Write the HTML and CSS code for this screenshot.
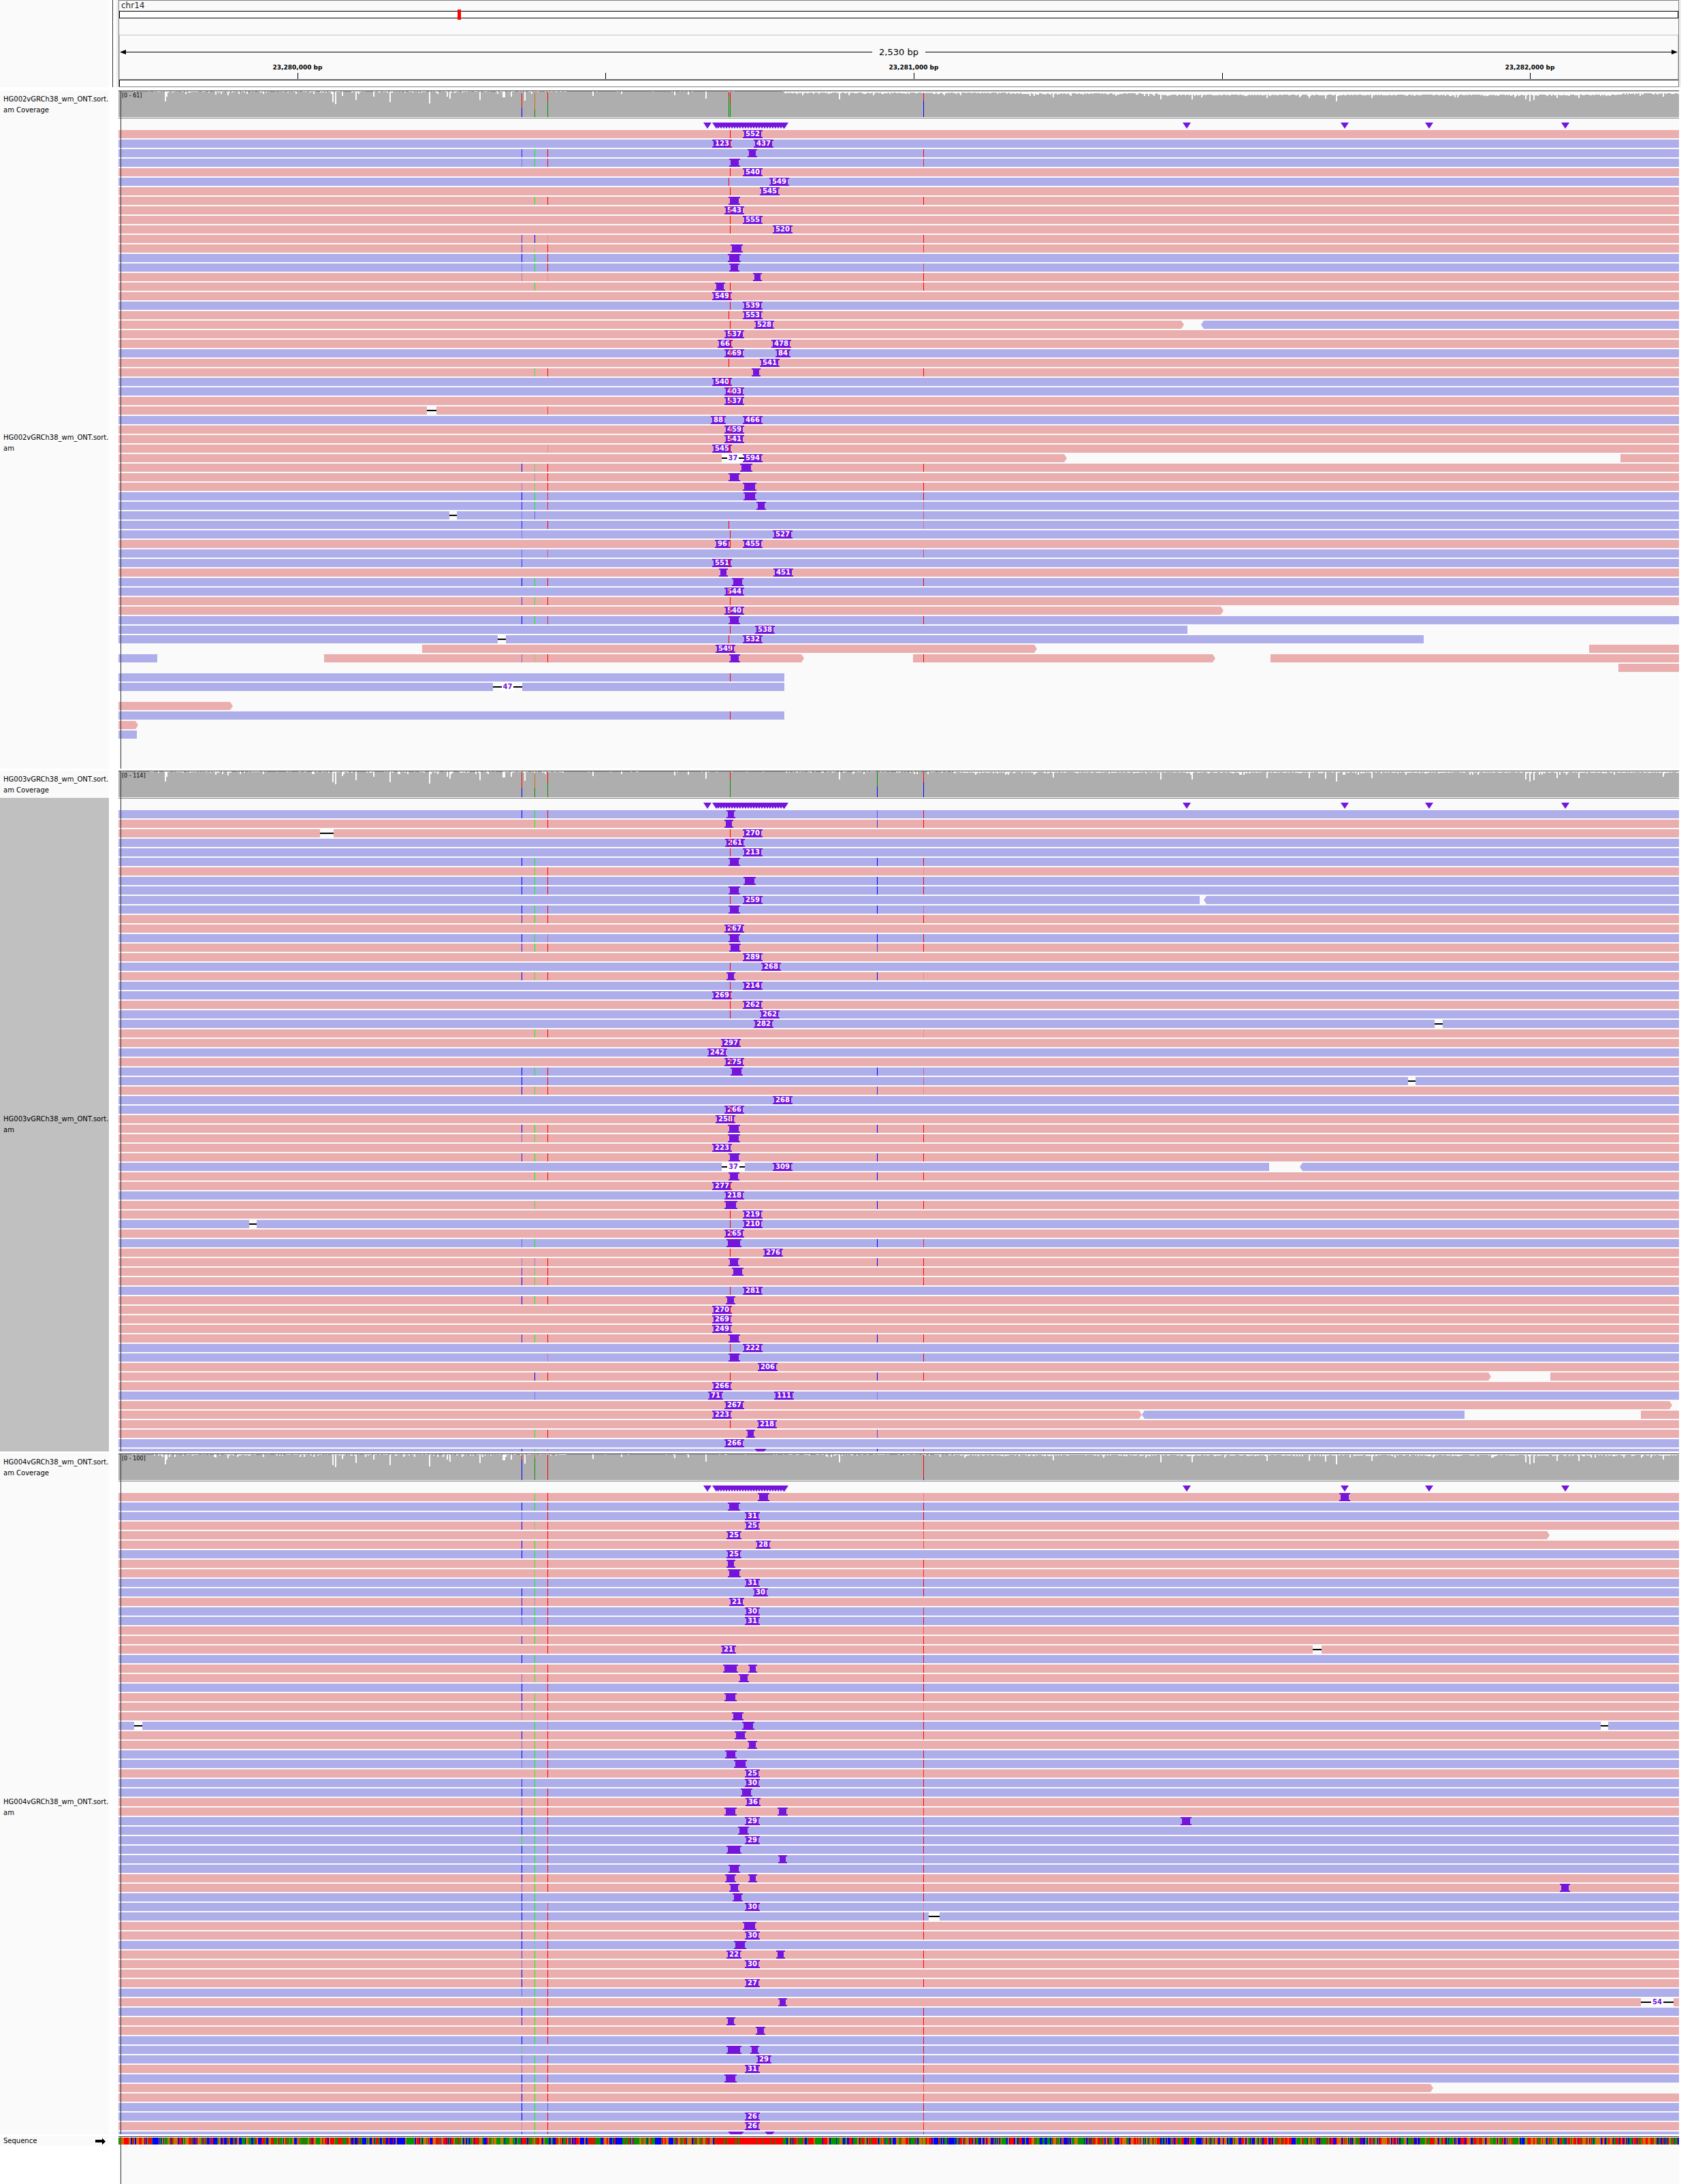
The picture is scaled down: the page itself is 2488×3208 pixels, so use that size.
FILE: index.html
```html
<!DOCTYPE html>
<html lang="en">
<head>
<meta charset="utf-8">
<title>chr14 alignments</title>
<link rel="stylesheet" href="styles.css">
</head>
<body>
<header class="header">
  <div class="name-panel"></div>
  <div class="divider"></div>
  <div class="locus">
    <div class="chromosome">chr14</div>
    <div class="ideogram"><span class="window" id="window"></span></div>
    <div class="ruler">
      <div class="span">
        <svg class="arrow" viewBox="0 0 9 7"><path d="M0 3.5L9 0V7Z"/></svg>
        <span class="span-line"></span>
        <span class="span-text">2,530 bp</span>
        <span class="span-line"></span>
        <svg class="arrow" viewBox="0 0 9 7"><path d="M9 3.5L0 0V7Z"/></svg>
      </div>
      <div class="ticks" id="ticks"></div>
    </div>
    <div class="regions"></div>
  </div>
  <div class="scroll-edge"></div>
</header>

<main>
  <section class="panel">
    <div class="names">
      <div class="name name-coverage">HG002vGRCh38_wm_ONT.sort.<br>am Coverage</div>
      <div class="name name-reads">HG002vGRCh38_wm_ONT.sort.<br>am</div>
    </div>
    <div class="data" data-track="HG002"></div>
  </section>
  <section class="panel">
    <div class="names">
      <div class="name name-coverage">HG003vGRCh38_wm_ONT.sort.<br>am Coverage</div>
      <div class="name name-reads selected">HG003vGRCh38_wm_ONT.sort.<br>am</div>
    </div>
    <div class="data" data-track="HG003"></div>
  </section>
  <section class="panel">
    <div class="names">
      <div class="name name-coverage">HG004vGRCh38_wm_ONT.sort.<br>am Coverage</div>
      <div class="name name-reads">HG004vGRCh38_wm_ONT.sort.<br>am</div>
    </div>
    <div class="data" data-track="HG004"></div>
  </section>
  <section class="panel panel-sequence">
    <div class="names">
      <div class="name name-sequence">Sequence
        <svg class="strand" viewBox="0 0 15 9"><path d="M0 2H10V0H11V1H12V2H13V3H14V4H15V5H14V6H13V7H12V8H11V9H10V6H0Z"/></svg>
      </div>
    </div>
    <div class="data" id="sequence"></div>
  </section>
</main>
<script src="tracks.js"></script>
</body>
</html>
```
FILE: styles.css
```css
:root {
  --paper: #fafafa;
  --line: #333;
  --edge: #808080;
  --forward: #ebaeae;
  --reverse: #aeaeeb;
  --insertion: #7515dc;
}

* { box-sizing: border-box; }

body {
  margin: 0;
  min-height: 100vh;
  display: flex;
  flex-direction: column;
  background: #fff;
  color: #000;
  font: 10px/16px "DejaVu Sans", sans-serif;
}

/* Header: chromosome, ideogram and ruler */
.header {
  display: grid;
  grid-template-columns: 160px 14px 1fr 3px;
  padding-right: 19px;
  margin-bottom: 5px;
}
.name-panel { background: var(--paper); }
.divider {
  margin-left: 5px;
  border-left: 1px solid var(--line);
  border-right: 3px solid #eee;
}
.scroll-edge { background: #eee; }
.locus {
  background: var(--paper);
  border: 1px solid var(--edge);
}
.chromosome {
  padding-left: 3px;
  font-size: 12px;
  line-height: 15px;
  color: #222;
}
.ideogram {
  position: relative;
  height: 11px;
  margin-bottom: 24px;
  background: #fff;
  border: 1px solid #000;
}
.window {
  position: absolute;
  top: -3px;
  width: 5px;
  height: 15px;
  background: #f00;
}
.ruler {
  padding-top: 14px;
  border: 1px solid #c4c4cc;
}
.span {
  display: flex;
  align-items: center;
  height: 21px;
}
.span-line {
  flex: 1;
  height: 1px;
  background: #000;
}
.span-text {
  padding: 0 10px;
  font-size: 13px;
}
.arrow { width: 9px; height: 7px; }
.ticks {
  position: relative;
  height: 29px;
  margin: 0 -2px;
}
.tick {
  position: absolute;
  bottom: 0;
  width: 100px;
  margin-left: -50px;
  font-size: 9px;
  font-weight: bold;
  line-height: 12px;
  text-align: center;
}
.tick::after {
  content: "";
  display: block;
  height: 9px;
  margin: 2px 0 0 50px;
  border-left: 1px solid #000;
}
.regions {
  height: 10px;
  background: #fff;
  border-top: 1px solid #000;
  border-left: 1px solid #000;
}

/* Panels */
main {
  flex: 1;
  display: flex;
  flex-direction: column;
  gap: 3px;
}
.panel {
  display: grid;
  grid-template-columns: 160px 1fr;
  column-gap: 14px;
  padding-right: 22px;
}
.panel-sequence { flex: 1; }
.names {
  display: flex;
  flex-direction: column;
  min-width: 0;
}
.name {
  display: flex;
  align-items: center;
  padding-left: 5px;
  overflow: hidden;
  white-space: nowrap;
  background: var(--paper);
}
.name-coverage {
  height: 40px;
  padding-top: 2px;
}
.name-reads { flex: 1; }
.name-sequence {
  justify-content: space-between;
  height: 14px;
  padding-right: 5px;
}
.selected { background: #c0c0c0; }
.strand { width: 15px; height: 9px; }

.data {
  position: relative;
  background: var(--paper);
  border-top: 1px solid var(--line);
}
.data::after {
  content: "";
  position: absolute;
  top: 0;
  bottom: 0;
  left: 3px;
  width: 1px;
  background: var(--line);
}

/* Coverage */
.coverage {
  position: relative;
  height: 40px;
  border-bottom: 1px solid var(--edge);
}
.plot {
  display: block;
  width: 100%;
  height: 38px;
}
.bars { fill: #aeaeae; }
.range {
  position: absolute;
  top: 1px;
  left: 5px;
  font-size: 8px;
  line-height: 12px;
}
.allele {
  position: absolute;
  width: 1px;
}

/* Insertion summary above the reads */
.summary {
  position: relative;
  height: 17px;
}
.marker {
  position: absolute;
  top: 6px;
  width: 12px;
  height: 9px;
  margin-left: -6px;
  background: var(--insertion);
  clip-path: polygon(0 0, 100% 0, 50% 100%);
}

/* Reads */
.reads {
  display: flex;
  flex-direction: column;
  gap: 2px;
  height: 942px;
  overflow: hidden;
}
.reads-short { height: 938px; }
.row {
  position: relative;
  flex: none;
  height: 12px;
}
.read {
  position: absolute;
  height: 12px;
}
.forward { background: var(--forward); }
.reverse { background: var(--reverse); }
.tip-right { clip-path: polygon(0 0, calc(100% - 4px) 0, 100% 50%, calc(100% - 4px) 100%, 0 100%); }
.tip-left { clip-path: polygon(4px 0, 100% 0, 100% 100%, 4px 100%, 0 50%); }
.insertion {
  position: absolute;
  height: 12px;
  color: #fff;
  font-weight: bold;
  line-height: 12px;
  text-align: center;
  background:
    linear-gradient(var(--insertion), var(--insertion)) top / 100% 2px no-repeat,
    linear-gradient(var(--insertion), var(--insertion)) bottom / 100% 2px no-repeat,
    linear-gradient(var(--insertion), var(--insertion)) center / calc(100% - 4px) 100% no-repeat;
}
.deletion {
  position: absolute;
  display: flex;
  justify-content: center;
  height: 12px;
  color: var(--insertion);
  font-weight: bold;
  line-height: 12px;
  background: linear-gradient(#000, #000) center / 100% 2px no-repeat var(--paper);
}
.deletion span {
  padding: 0 2px;
  background: #fff;
}
.snp {
  position: absolute;
  width: 1px;
  height: 12px;
}

/* Reference sequence */
.bases {
  display: block;
  width: 100%;
  height: 10px;
  margin-top: 1px;
}
```
FILE: tracks.js
```js
// Positions are in view units: the visible window runs from START to END.
const START = 174;
const END = 2466;
const SPAN = END - START;
const pct = (x) => ((x - START) / SPAN * 100).toFixed(5) + '%';
const pctWidth = (w) => (w / SPAN * 100).toFixed(5) + '%';

const RED = '#f00';
const BLUE = '#00f';
const GREEN = '#0f0';
const DARK_GREEN = '#009600';
const ORANGE = '#d17105';

// Variant sites: letter -> [position, colour]
const SITES = {
  a: [766, BLUE], c: [766, GREEN],
  g: [785, GREEN], h: [785, BLUE],
  t: [804, RED], w: [804, BLUE],
  q: [1070, RED], s: [1072, RED],
  u: [1288, BLUE], v: [1356, RED]
};

// Row syntax: r / b = whole-window read, r<x-y> = part with a pointed end,
// 552@x = sized insertion, @x+w = wide insertion, dx-y=n = deletion,
// a site letter with an optional opacity digit = mismatch.
const ROWS = {
  HG002: `
r s 552@1091
b s 123@1046 437@1107
b a8 g t v @1098+14
b a3 g t v8 @1071+16
r s 540@1091
b q 549@1130
r s 545@1116
r g t v @1070+17
r s 543@1064
r s 555@1091
r s 520@1135
r a7 h t2 v
r a7 g3 t v8 @1073+18
b a g t @1069+19
b a3 g t v6 @1071+15
r a3 t2 v @1106+13
r g v s @1050+15
r q 549@1046
b s 539@1091
r q 553@1091
r174-1739> b<1764-2466 s 528@1108
r s 537@1064
r s 66@1054 478@1133
b s 469@1064 84@1139
r q 541@1116
r g8 t v @1104+13
b q 540@1046
b s 403@1064
r s 537@1064
r t7 d627-641
b 88@1044 466@1091
r s 459@1064
r s 541@1064
r t2 q 545@1046
r174-1567> r2380-2466 d1060-1093=37 594@1091
r a g5 t v @1087+18
r h2 t @1070+17
r a3 g5 t v @1091+20
b a g t8 v @1092+19
b a8 g t8 v4 @1111+14
b a3 h4 v5 d660-671
b a8 t q v3
b a3 s 527@1135
r s 96@1050 455@1091
b a4 t5 v6
b a7 q 551@1046
r @1056+13 451@1136
b a g t v @1075+17
b q 544@1064
r a7 g8 t s
r174-1797> s 540@1064
b a g t8 v @1070+17
b174-1744 s 538@1109
b174-2091 q 532@1091 d731-743
r620-1523> r2334-2466 s 549@1051
b174-231 r476-1181> r1341-1785> r1866-2466 a4 g4 t v @1071+16
r2377-2466
b174-1152 s
b174-1152 d724-767=47
-
r174-342>
b174-1152 s
r174-203>
b174-201`,
  HG003: `
b a g t u5 v @1067+13
r g t u7 v @1064+13
r s 270@1091 d470-490
b s 261@1065
b s 213@1091
b a g u v @1070+17
r g7 t v2
b a g t u v @1092+18
b a g t u v @1070+17
b174-1762 b<1768-2466 s 259@1091
b a g t u v4 @1070+17
r a8 g t v
r s 267@1064
b a g8 t4 u v @1070+17
r a8 g t u7 v @1071+17
r 289@1091
b s 268@1118
r a g8 t u v2 @1067+13
b s 214@1091
b s 269@1046
r s 262@1091
b s 262@1116
b 282@1107 d2107-2119
r g t v2
r 297@1059
b 242@1039
r s 275@1064
b a g t u v4 @1073+18
b a t v5 d2068-2079
r a g8 t u8 v2
b 268@1135
b s 266@1064
r s 258@1051
r a g t u v @1069+18
r a4 g7 t v @1069+18
r 223@1046
r a8 g t u v @1070+17
b174-1864 b<1909-2466 d1060-1094=37 309@1135
r g t u v @1070+16
r s 277@1046
b 218@1064
r g7 u v @1064+19
r s 219@1091
b s 210@1091 d366-377
r s 265@1064
b a4 g u v8 @1067+22
r s 276@1121
r a3 h3 t u v @1070+16
r a7 g7 t v @1075+17
r a g7 t v
b s 281@1091
r a g t @1066+14
r s 270@1046
r 269@1046
r 249@1046
r a8 g t u v @1070+17
b s 222@1091
b t3 v @1070+17
r 206@1113
r174-2190> r2277-2466 h t s u v
r 266@1046
b h3 u3 71@1040 111@1137
r174-2456> 267@1064
r174-1677> b<1677-2151 r2410-2466 223@1046
r s 218@1112
r g t u6 @1096+13
b 266@1064
b a g t4 u v @1109+16`,
  HG004: `
r g8 t v3 @1113+17 @1967+16
b a g t v @1069+18
b a4 t v 31@1094
r a g5 t v8 25@1094
r174-2276> t v6 25@1067
r a g t v6 28@1110
b a g t 25@1067
r g8 t v @1067+13
r g5 t v8 @1069+19
b g t v 31@1094
b a g t v 30@1106
r a8 h2 t 21@1071
b a g t v8 30@1094
b a5 g t v 31@1094
r g6 t v6
r a8 g t v
r t v 21@1059 d1928-1941
b a g v
r g8 t v @1062+22 @1099+13
r a4 g8 t v @1085+15
b a t v
r a g8 t v @1064+18
r a8 g8 t v2
r a2 g3 t v8 @1075+17
b g t4 v @1090+18 d197-209 d2351-2362
r a g8 t v @1079+17
r a4 g8 t @1098+14
b a g t v @1065+17
b a3 g t v @1078+19
r g8 t v8 25@1094
b a8 g v 30@1094
b a g t v @1088+17
r a4 g8 t v 36@1095
r a g6 t v8 @1064+18 @1142+15
b a g t v8 29@1094 @1734+16
b a g t v8 @1084+16
b c g t6 v 29@1094
b a g t v @1067+22
b a4 g t v4 @1143+13
b a g t v @1070+17
r a g t v @1065+16 @1099+13
r a4 g t v @1071+15 @2291+15
b a g v @1076+15
b a8 g t6 v2 30@1094
b a g t v d1364-1380
r a4 g t v @1091+20
r a g t v 30@1094
b a g3 t @1078+18
r a7 g t v 22@1067 @1140+13
r a4 g t v 30@1094
r a g t
r a g t v 27@1094
b a4 g t
r g7 t @1143+13 d2410-2458=54
b a g t v
r a8 g t v @1067+13
r g t v @1110+14
b a g t v
b c5 v @1067+22 @1102+13
b a5 g t v 29@1111
r a4 g8 t v 31@1094
b a g t v @1064+18
r174-2105> a7 g t v5
r a g t v8
b a g w5 v
b a g t v8 26@1094
r a2 g t v8 26@1094
b a8 g t v8 @1070+22 @1124+13`
};

// Coverage dips shared by the three samples: [position, depth]
const DIPS = [
  [242, 15], [244, 8], [316, 5], [334, 6], [461, 4], [488, 16], [492, 14], [493, 19],
  [502, 7], [522, 13], [548, 8], [572, 16], [630, 18], [656, 8], [661, 11], [704, 13],
  [738, 9], [741, 9], [750, 8], [771, 14], [871, 7], [912, 4], [990, 6], [1011, 5],
  [1037, 11], [1233, 12], [1546, 9], [1705, 12], [1750, 12], [1861, 10], [1923, 10],
  [1946, 11], [1963, 15], [2015, 10], [2241, 12], [2246, 15], [2253, 13], [2286, 10],
  [2319, 10], [2442, 8]
];

const TRACKS = {
  HG002: {
    range: '[0 - 61]',
    base: (x) => (x < 1152 ? 0 : x < 1500 ? 2 : x < 1700 ? 3 : x > 2380 ? 3 : 5),
    alleles: [
      [766, 3, 24, RED], [766, 24, 38, BLUE], [785, 2, 27, ORANGE], [785, 27, 38, DARK_GREEN],
      [804, 1, 14, RED], [804, 14, 38, DARK_GREEN], [1070, 1, 7, RED], [1070, 7, 38, DARK_GREEN],
      [1072, 2, 18, RED], [1072, 18, 38, DARK_GREEN], [1356, 2, 14, RED], [1356, 14, 38, BLUE]
    ]
  },
  HG003: {
    range: '[0 - 114]',
    base: (x) => (x < 1400 ? 0 : 1),
    alleles: [
      [766, 1, 24, RED], [766, 24, 38, BLUE], [785, 3, 24, ORANGE], [785, 24, 38, DARK_GREEN],
      [804, 1, 17, RED], [804, 17, 38, DARK_GREEN], [1072, 1, 12, RED], [1072, 12, 38, DARK_GREEN],
      [1288, 1, 22, DARK_GREEN], [1288, 22, 38, BLUE], [1356, 1, 16, RED], [1356, 16, 38, BLUE]
    ]
  },
  HG004: {
    range: '[0 - 100]',
    base: (x) => (x < 1400 ? 0 : 1),
    alleles: [
      [766, 1, 8, RED], [766, 8, 38, BLUE], [785, 1, 6, ORANGE], [785, 6, 38, DARK_GREEN],
      [804, 1, 38, RED], [1356, 1, 36, RED], [1356, 36, 38, BLUE]
    ]
  }
};

const MARKERS = [1039, 1743, 1975, 2099, 2299];
for (let x = 1052; x <= 1152; x += x % 2 === 0 ? 3 : 4) MARKERS.push(x);
MARKERS.push(1152);

function random(seed) {
  let s = seed;
  return () => (s = (s * 16807) % 2147483647) / 2147483647;
}

function el(className, style, text) {
  const node = document.createElement('div');
  node.className = className;
  Object.assign(node.style, style);
  if (text) node.textContent = text;
  return node;
}

function coverage(track, seed) {
  const next = random(seed);
  const dips = new Map(DIPS.map(([x, d]) => [x - x % 2, d]));
  let path = 'M0 38';
  for (let x = START; x < END; x += 2) {
    const n = next();
    const quiet = x < 218 || (x > 830 && x < 1150);
    let depth = track.base(x) + (quiet ? (n > 0.92 ? 1 : 0) : n > 0.96 ? 4 : n > 0.85 ? 2 : n > 0.45 ? 1 : 0);
    if (dips.has(x)) depth = Math.max(depth, dips.get(x));
    path += `V${depth}h2`;
  }
  const box = el('coverage', {});
  box.innerHTML = `<svg class="plot" viewBox="0 0 ${SPAN} 38" preserveAspectRatio="none" shape-rendering="crispEdges"><path class="bars" d="${path}V38Z"/></svg>`;
  for (const [x, from, to, colour] of track.alleles) {
    box.append(el('allele', { left: pct(x), top: from + 'px', height: to - from + 'px', background: colour }));
  }
  box.append(el('range', {}, track.range));
  return box;
}

function summary() {
  const box = el('summary', {});
  for (const x of MARKERS) box.append(el('marker', { left: pct(x) }));
  return box;
}

function row(line) {
  const box = el('row', {});
  const over = [];
  for (const token of line.split(' ')) {
    let m;
    if (token === 'r' || token === 'b') {
      box.append(el('read ' + (token === 'r' ? 'forward' : 'reverse'), { left: '0', width: '100%' }));
    } else if ((m = token.match(/^([rb])(<?)(\d+)-(\d+)(>?)$/))) {
      const name = 'read ' + (m[1] === 'r' ? 'forward' : 'reverse') + (m[2] ? ' tip-left' : '') + (m[5] ? ' tip-right' : '');
      box.append(el(name, { left: pct(+m[3]), width: pctWidth(m[4] - m[3]) }));
    } else if ((m = token.match(/^(\d+)@(\d+)$/))) {
      box.append(el('insertion', { left: pct(+m[2]), width: (8 + 7 * m[1].length) + 'px' }, m[1]));
    } else if ((m = token.match(/^@(\d+)\+(\d+)$/))) {
      box.append(el('insertion', { left: pct(+m[1]), width: m[2] + 'px' }));
    } else if ((m = token.match(/^d(\d+)-(\d+)=?(\d*)$/))) {
      const gap = el('deletion', { left: pct(+m[1]), width: pctWidth(m[2] - m[1]) });
      if (m[3]) gap.innerHTML = `<span>${m[3]}</span>`;
      box.append(gap);
    } else if ((m = token.match(/^([a-z])(\d?)$/))) {
      const [x, colour] = SITES[m[1]];
      over.push(el('snp', { left: pct(x), background: colour, opacity: m[2] ? m[2] / 10 : 1 }));
    }
  }
  box.append(...over);
  return box;
}

document.querySelectorAll('[data-track]').forEach((panel, i) => {
  const id = panel.dataset.track;
  const reads = el(i === 0 ? 'reads reads-short' : 'reads', {});
  ROWS[id].trim().split('\n').forEach((line) => reads.append(row(line)));
  panel.append(coverage(TRACKS[id], 71 + i * 997), summary(), reads);
});

// Reference bases; the repeat in the middle is almost all T.
const next = random(4242);
let bases = '';
for (let x = 0; x < SPAN;) {
  const at = x + START;
  const repeat = at > 1050 && at < 1152;
  const n = next();
  const colour = repeat
    ? (n < 0.14 ? DARK_GREEN : RED)
    : n < 0.25 ? DARK_GREEN : n < 0.5 ? BLUE : n < 0.76 ? ORANGE : RED;
  const width = Math.min(SPAN - x, next() < 0.6 ? 1 : next() < 0.6 ? 2 : 4);
  bases += `<rect x="${x}" width="${width}" height="10" fill="${colour}"/>`;
  x += width;
}
document.getElementById('sequence').innerHTML =
  `<svg class="bases" viewBox="0 0 ${SPAN} 10" preserveAspectRatio="none" shape-rendering="crispEdges">${bases}</svg>`;

document.getElementById('window').style.left = pct(671);
const ticks = document.getElementById('ticks');
[[437, '23,280,000 bp'], [889, ''], [1342, '23,281,000 bp'], [1795, ''], [2247, '23,282,000 bp']].forEach(([x, text]) => {
  ticks.append(el('tick', { left: pct(x) }, text));
});
```
